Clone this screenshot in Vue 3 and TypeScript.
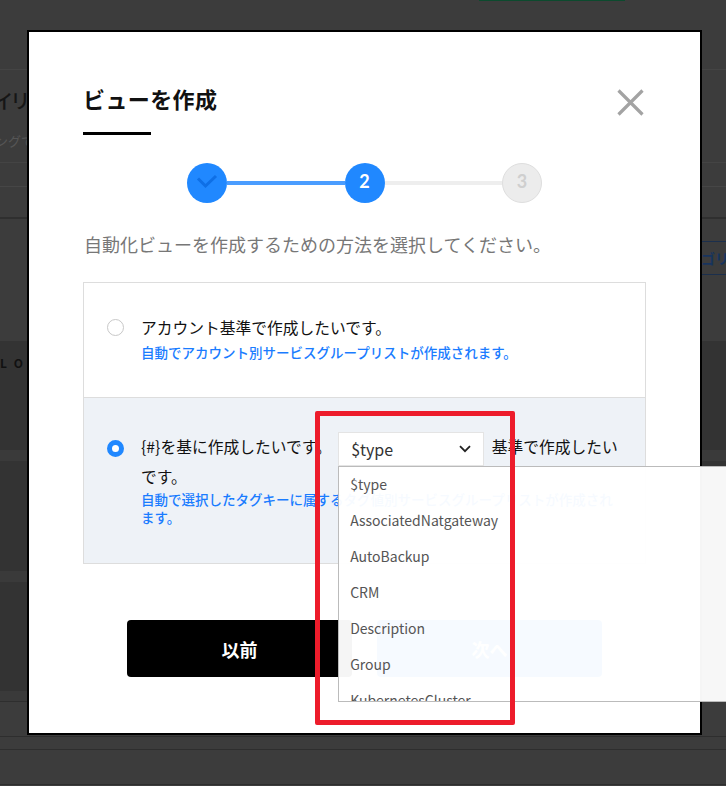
<script setup lang="ts">
const tagKeys: string[] = ['$type', 'AssociatedNatgateway', 'AutoBackup', 'CRM', 'Description', 'Group', 'KubernetesCluster']
</script>

<template>
  <div class="page">
    <div class="bg-top"><span class="bg-green"></span></div>
    <div class="bg-head">
      <div class="bg-title">イリア</div>
      <div class="bg-sub">ングで</div>
    </div>
    <div class="bg-row h24"></div>
    <div class="bg-row h32 strong"></div>
    <div class="bg-action"><span class="bg-btn">カテゴリ付与する</span></div>
    <div class="bg-panel">
      <div class="bg-logo">L O a</div>
      <div class="bg-strip strip-a"></div>
      <div class="bg-strip strip-b"></div>
    </div>
    <div class="bg-foot f11"></div>
    <div class="bg-foot f35"></div>
    <div class="bg-foot f12"></div>
    <div class="bg-foot f35"></div>

    <div class="modal">
      <header class="modal-head">
        <div class="title-wrap">
          <h2 class="title">ビューを作成</h2>
          <div class="title-bar"></div>
        </div>
        <svg class="close" width="27" height="27" viewBox="0 0 27 27" fill="none">
          <path d="M1.5 1.5L25.5 25.5M25.5 1.5L1.5 25.5" stroke="#a3a3a3" stroke-width="3.2" />
        </svg>
      </header>

      <div class="steps">
        <div class="step on">
          <svg width="22" height="16" viewBox="0 0 22 16" fill="none">
            <path d="M2 5.5L9.5 13L20 3" stroke="#0e6fe6" stroke-width="3" />
          </svg>
        </div>
        <div class="link on"></div>
        <div class="step on">2</div>
        <div class="link short"></div>
        <div class="step off">3</div>
      </div>

      <p class="lead">自動化ビューを作成するための方法を選択してください。</p>

      <div class="options">
        <div class="option account">
          <span class="radio"></span>
          <div class="body">
            <div class="main">アカウント基準で作成したいです。</div>
            <div class="hint">自動でアカウント別サービスグループリストが作成されます。</div>
          </div>
        </div>
        <div class="option tag">
          <span class="radio checked"></span>
          <div class="body">
            <div class="main tall">
              {#}を基に作成したいです。
              <span class="select">
                <span class="select-value">
                  $type
                  <svg width="12" height="8" viewBox="0 0 12 8" fill="none">
                    <path d="M1 1.2L6 6.2L11 1.2" stroke="#222" stroke-width="1.8" />
                  </svg>
                </span>
                <ul class="menu">
                  <li v-for="key in tagKeys" :key="key">{{ key }}</li>
                </ul>
              </span>
              基準で作成したいです。
            </div>
            <div class="hint">自動で選択したタグキーに属するタグ値別サービスグループリストが作成されます。</div>
          </div>
        </div>
      </div>

      <div class="actions">
        <button class="btn prev">以前</button>
        <button class="btn next">次へ</button>
      </div>
    </div>

    <div class="annotation"></div>
  </div>
</template>

<style>
html, body { margin: 0; overflow: hidden; background: #3c3c3c; }
</style>

<style scoped>
.page {
  position: relative;
  width: 726px;
  height: 786px;
  overflow: hidden;
  background: #3c3c3c;
  font-family: "Noto Sans CJK JP", "Noto Sans", sans-serif;
  display: flex;
  flex-direction: column;
}
.bg-top { height: 69px; border-bottom: 1px solid #444; flex: none; }
.bg-green { display: block; width: 146px; height: 1px; margin-left: 479px; background: #0c4a2e; }
.bg-head { height: 92px; border-bottom: 1px solid #444; flex: none; overflow: hidden; }
.bg-title { margin: 15px 0 0 -6px; font-size: 20px; line-height: 32px; font-weight: 500; color: #161616; white-space: nowrap; font-feature-settings: "palt"; }
.bg-sub { margin: 14px 0 0 -5px; font-size: 13px; line-height: 20px; color: #555; white-space: nowrap; }
.bg-row { flex: none; border-bottom: 1px solid #464646; }
.h24 { height: 23px; }
.h32 { height: 30px; }
.strong { border-bottom: 2px solid #2f2f2f; }
.bg-action { height: 122px; flex: none; display: flex; justify-content: flex-end; align-items: flex-start; }
.bg-btn {
  margin: 22px -73px 0 0;
  height: 32px;
  line-height: 32px;
  border-top: 1px solid #1b2f4d;
  border-bottom: 1px solid #1b2f4d;
  padding: 0 14px;
  font-size: 14px;
  font-weight: 700;
  color: #17345e;
  white-space: nowrap;
}
.bg-panel { height: 350px; flex: none; background: #333; overflow: hidden; position: relative; }
.bg-logo { margin: 12px 0 0 0; font-size: 12px; line-height: 20px; font-weight: 700; color: #111; letter-spacing: 2px; }
.bg-strip { height: 11px; background: #3a3a3a; }
.strip-a { margin-top: 77px; }
.strip-b { margin-top: 110px; }
.bg-foot { flex: none; background: #3c3c3c; border-bottom: 1px solid #2e2e2e; }
.f11 { height: 10px; background: #3a3a3a; }
.f35 { height: 34px; }
.f12 { height: 12px; }

.modal {
  position: absolute;
  left: 27px;
  top: 30px;
  width: 675px;
  height: 705px;
  box-sizing: border-box;
  border: 2px solid #000;
  background: #fff;
  padding: 50px 54px 0;
}
.modal-head { display: flex; justify-content: space-between; align-items: flex-start; }
.title { margin: 0; font-size: 22px; line-height: 32px; font-weight: 700; color: #111; letter-spacing: 0.4px; }
.title-bar { width: 68px; height: 3px; background: #000; margin-top: 18px; }
.close { margin: 7px 2px 0 0; }
.steps { display: flex; align-items: center; justify-content: center; margin-top: 28px; }
.step {
  width: 40px;
  height: 40px;
  box-sizing: border-box;
  border-radius: 50%;
  display: flex;
  align-items: center;
  justify-content: center;
  font-size: 18px;
  line-height: 18px;
  padding-bottom: 4px;
  font-weight: 700;
  font-family: Lato, sans-serif;
  flex: none;
}
.step.on { background: #2088ff; color: #fff; padding-right: 1px; }
.step.off { background: #ececec; border: 1px solid #dedede; color: #cfcfcf; }
.link { width: 118px; height: 4px; background: #eee; margin-top: -1px; }
.link.short { width: 117px; }
.link.on { background: #4a9dff; }
.lead { margin: 28px 0 0 1px; font-size: 18px; line-height: 26px; color: #777; white-space: nowrap; }
.options { margin-top: 25px; border: 1px solid #ddd; }
.option { display: flex; align-items: flex-start; padding-left: 23px; }
.option.account { height: 114px; border-bottom: 1px solid #ddd; }
.option.tag { height: 165px; background: #eef2f7; }
.radio {
  width: 17px;
  height: 17px;
  box-sizing: border-box;
  border-radius: 50%;
  border: 1px solid #c8c8c8;
  background: #fff;
  flex: none;
  margin-top: 36px;
}
.tag .radio { margin-top: 42px; }
.radio.checked { border: 5px solid #2088ff; }
.body { margin-left: 17px; width: 484px; }
.account .body { padding-top: 33px; }
.tag .body { padding-top: 34px; }
.main { font-size: 15.75px; line-height: 24px; color: #111; }
.main.tall { line-height: 30px; }
.account .hint { margin-top: 3px; }
.tag .hint { margin-top: -2px; }
.hint { font-size: 13.5px; line-height: 18px; font-weight: 500; color: #1a7cff; }
.select {
  position: relative;
  display: inline-block;
  vertical-align: middle;
  width: 146px;
  height: 34px;
  margin: -4px 4px -4px 3px;
}
.select-value {
  display: flex;
  align-items: center;
  justify-content: space-between;
  box-sizing: border-box;
  height: 34px;
  padding: 0 12px 0 12px;
  background: #fff;
  border: 1px solid #e4e4e4;
  font-size: 16px;
  color: #333;
}
.menu {
  position: absolute;
  left: 0;
  top: 34px;
  width: 420px;
  height: 236px;
  box-sizing: border-box;
  margin: 0;
  padding: 0;
  list-style: none;
  overflow: hidden;
  background: rgba(255, 255, 255, 0.96);
  border: 1px solid #bbb;
  z-index: 2;
}
.menu li { height: 36px; line-height: 35px; padding-left: 11px; font-size: 14px; color: #555; }
.actions { display: flex; justify-content: center; gap: 25px; margin-top: 56px; }
.btn {
  width: 225px;
  height: 57px;
  border: 0;
  border-radius: 4px;
  color: #fff;
  font: 700 18px "Noto Sans CJK JP", sans-serif;
  padding: 0;
}
.prev { background: #000; }
.next { background: #1e88ff; }
.annotation {
  position: absolute;
  left: 315px;
  top: 411px;
  width: 200px;
  height: 314px;
  box-sizing: border-box;
  border: 5px solid #ed1c2b;
  border-radius: 2px;
  z-index: 5;
}
</style>
